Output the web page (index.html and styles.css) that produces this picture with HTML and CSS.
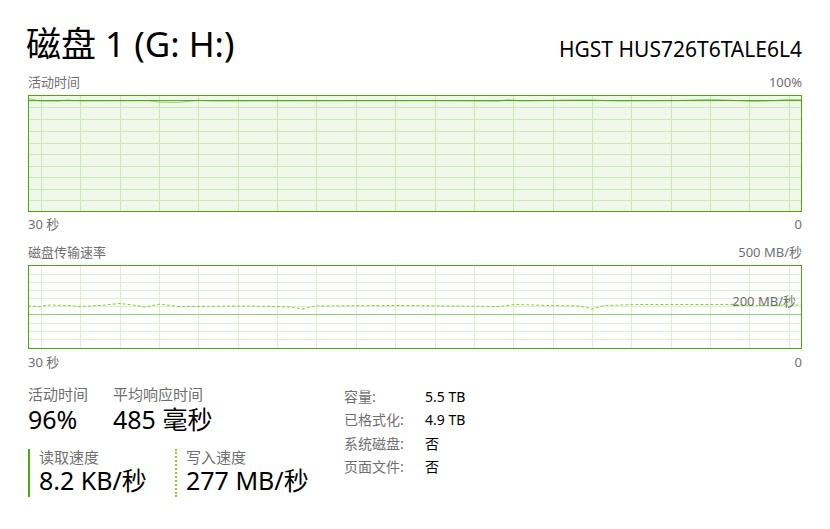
FILE: index.html
```html
<!DOCTYPE html>
<html lang="zh-CN">
<head>
<meta charset="utf-8">
<title>磁盘 1 (G: H:)</title>
<link rel="stylesheet" href="styles.css">
</head>
<body>
<div class="page">
  <div class="header">
    <div class="title">磁盘 1 (G: H:)</div>
    <div class="model">HGST HUS726T6TALE6L4</div>
  </div>

  <div class="axis axis-top first">
    <span>活动时间</span><span>100%</span>
  </div>
  <svg class="graph" width="774" height="117" viewBox="0 0 774 117">
    <rect x="0.5" y="0.5" width="773" height="116" fill="#eff7e9" stroke="none"/>
    <path class="grid1" d="M13.5 1V116M52.5 1V116M92.5 1V116M131.5 1V116M170.5 1V116M210.5 1V116M249.5 1V116M288.5 1V116M328.5 1V116M367.5 1V116M407.5 1V116M446.5 1V116M485.5 1V116M525.5 1V116M564.5 1V116M603.5 1V116M643.5 1V116M682.5 1V116M721.5 1V116M761.5 1V116M1 12.5H773M1 24.5H773M1 36.5H773M1 48.5H773M1 59.5H773M1 71.5H773M1 82.5H773M1 94.5H773M1 105.5H773"/>
    <polyline class="wave1" points="0,3.5 12,6 30,6.2 40,5 52,6 90,5.7 120,5.6 132,7.2 150,7.5 170,5.3 185,6 400,5.6 470,6.2 480,4.6 495,6 540,5 560,4.8 590,6 650,5.6 680,4.4 700,5 725,6.6 745,5.6 760,4.4 773,4.8"/>
    <line class="line1" x1="1" y1="5.6" x2="773" y2="5.6"/>
    <rect x="0.5" y="0.5" width="773" height="116" fill="none" class="frame"/>
  </svg>
  <div class="axis axis-bottom">
    <span>30 秒</span><span>0</span>
  </div>

  <div class="axis axis-top second">
    <span>磁盘传输速率</span><span>500 MB/秒</span>
  </div>
  <svg class="graph" width="774" height="84" viewBox="0 0 774 84">
    <rect x="0.5" y="0.5" width="773" height="83" fill="#ffffff"/>
    <path class="grid2" d="M13.5 1V83M52.5 1V83M92.5 1V83M131.5 1V83M170.5 1V83M210.5 1V83M249.5 1V83M288.5 1V83M328.5 1V83M367.5 1V83M407.5 1V83M446.5 1V83M485.5 1V83M525.5 1V83M564.5 1V83M603.5 1V83M643.5 1V83M682.5 1V83M721.5 1V83M761.5 1V83M1 9.5H773M1 17.5H773M1 25.5H773M1 33.5H773M1 41.5H773M1 58.5H773M1 66.5H773M1 74.5H773"/>
    <line class="line2" x1="1" y1="49.5" x2="773" y2="49.5"/>
    <polyline class="dash2" points="0,41 12,41.5 22,40 40,40.5 52,41.5 72,40.5 92,38.5 105,40 117,42 132,39 150,41.5 222,41 262,42 275,44 287,41 372,40.5 472,41.5 487,39.5 522,40.5 552,41 564,44 576,40.5 612,39.5 702,39.5 732,40.5 773,40"/>
    <text class="scale-label" x="768" y="41" text-anchor="end">200 MB/秒</text>
    <rect x="0.5" y="0.5" width="773" height="83" fill="none" class="frame"/>
  </svg>
  <div class="axis axis-bottom second-bottom">
    <span>30 秒</span><span>0</span>
  </div>

  <div class="stats">
    <div class="stats-left">
      <div class="stats-row">
        <div class="stat stat-active">
          <div class="stat-label">活动时间</div>
          <div class="stat-value">96%</div>
        </div>
        <div class="stat">
          <div class="stat-label">平均响应时间</div>
          <div class="stat-value">485 毫秒</div>
        </div>
      </div>
      <div class="speeds">
        <div class="speed speed-read">
          <div class="stat-label">读取速度</div>
          <div class="stat-value">8.2 KB/秒</div>
        </div>
        <div class="speed speed-write">
          <div class="stat-label">写入速度</div>
          <div class="stat-value">277 MB/秒</div>
        </div>
      </div>
    </div>
    <div class="props">
      <span class="prop-name">容量:</span><span class="prop-val">5.5 TB</span>
      <span class="prop-name">已格式化:</span><span class="prop-val">4.9 TB</span>
      <span class="prop-name">系统磁盘:</span><span class="prop-val">否</span>
      <span class="prop-name">页面文件:</span><span class="prop-val">否</span>
    </div>
  </div>
</div>
</body>
</html>
```

FILE: styles.css
```css
html, body {
  margin: 0;
  padding: 0;
  background: #ffffff;
}

body {
  font-family: "Noto Sans", "Noto Sans CJK SC", sans-serif;
  color: #000000;
}

.page {
  width: 774px;
  padding: 0 28px;
}

.header {
  display: flex;
  justify-content: space-between;
  align-items: baseline;
  height: 40px;
  padding-top: 24px;
}

.title {
  font-size: 35px;
  line-height: 40px;
  margin-left: -2px;
}

.model {
  font-size: 21px;
  line-height: 40px;
}

.axis {
  display: flex;
  justify-content: space-between;
  font-size: 13px;
  line-height: 16px;
  height: 16px;
  color: #6f6f6f;
}

.axis.first {
  margin-top: 10px;
}

.axis.second {
  margin-top: 12px;
}

.axis-bottom {
  margin-top: 4px;
}

.axis-bottom.second-bottom {
  margin-top: 5px;
}

.graph {
  display: block;
  margin-top: 5px;
}

.frame {
  stroke: #4da60c;
  stroke-width: 1;
}

.grid1 {
  stroke: #cbe6b9;
  stroke-width: 1;
  fill: none;
}

.grid2 {
  stroke: #dcefd0;
  stroke-width: 1;
  fill: none;
}

.wave1 {
  fill: none;
  stroke: #9fd183;
  stroke-width: 1;
}

.line1 {
  stroke: #4da60c;
  stroke-width: 1;
}

.line2 {
  stroke: #93d174;
  stroke-width: 1;
}

.dash2 {
  fill: none;
  stroke: #8ccf2a;
  stroke-width: 1;
  stroke-dasharray: 3 2;
}

.scale-label {
  font-family: "Noto Sans", "Noto Sans CJK SC", sans-serif;
  font-size: 13px;
  fill: #6f6f6f;
}

.stats {
  display: flex;
  align-items: flex-start;
  margin-top: 14px;
}

.stats-left {
  width: 316px;
}

.stats-row {
  display: flex;
}

.stat-active {
  width: 85px;
}

.stat-label {
  font-size: 15px;
  line-height: 20px;
  height: 20px;
  color: #6f6f6f;
}

.stat-value {
  font-size: 25px;
  line-height: 30px;
  height: 30px;
}

.speeds {
  display: flex;
  margin-top: 15px;
}

.speed {
  padding-left: 9px;
  padding-bottom: 2px;
}

.speed .stat-label {
  line-height: 17px;
  height: 17px;
}

.speed .stat-value {
  line-height: 29px;
  height: 29px;
}

.speed-read {
  width: 136px;
  border-left: 2px solid #4da60c;
}

.speed-write {
  border-left: 2px dotted #8bd12b;
}

.props {
  display: grid;
  grid-template-columns: 81px auto;
  grid-auto-rows: 23.3px;
  align-content: start;
  margin-top: 1px;
  font-size: 14px;
  line-height: 23.3px;
}

.prop-name {
  color: #6f6f6f;
}

.prop-val {
  color: #000000;
}
```
